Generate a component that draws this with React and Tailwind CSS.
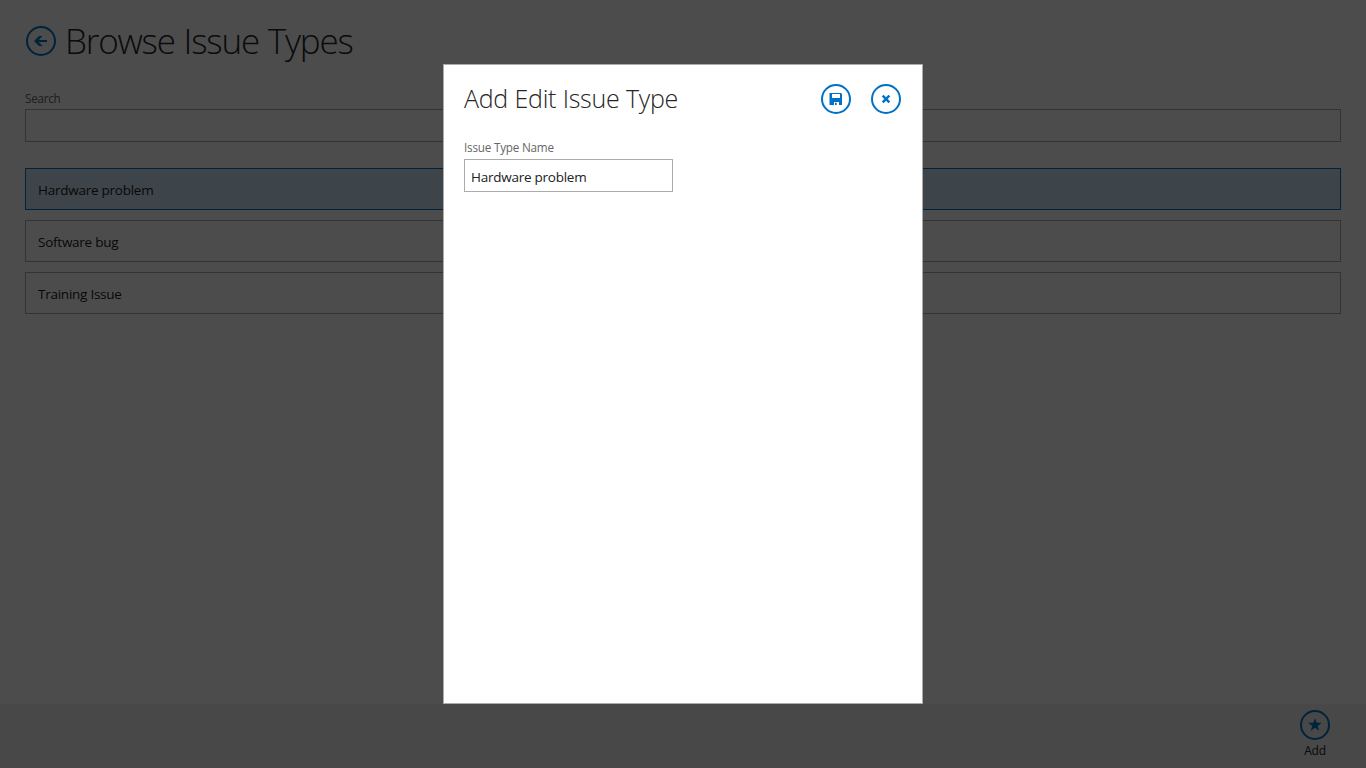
const issueTypes = ["Hardware problem", "Software bug", "Training Issue"];

function RoundIcon({ label, children }) {
  return (
    <button aria-label={label} className="block size-[30px] shrink-0 text-[#0072c6]">
      <svg viewBox="0 0 30 30" className="size-[30px]" fill="currentColor">
        <circle cx="15" cy="15" r="14" fill="none" stroke="currentColor" strokeWidth="2" />
        {children}
      </svg>
    </button>
  );
}

function Page() {
  return (
    <div className="flex h-full flex-col bg-white">
      <header className="flex h-[89px] items-start pl-[26px] pt-[26px]">
        <RoundIcon label="Back">
          <path d="M8 15 13 10H16.6L12.6 14H21V16H12.6L16.6 20H13Z" />
        </RoundIcon>
        <h1 className="ml-[9px] -mt-[9px] whitespace-nowrap text-[35px] font-light leading-[48px] tracking-[-1.2px] text-[#262626] [word-spacing:1px]">
          Browse Issue Types
        </h1>
      </header>
      <main className="flex-1 px-[25px]">
        <label className="block h-5 text-[11.7px] leading-[18px] tracking-[-0.25px] text-[#666666]">Search</label>
        <div className="h-[33px] border border-[#ababab]" />
        <ul className="mt-[26px] flex flex-col gap-2.5">
          {issueTypes.map((name, i) => (
            <li
              key={name}
              className={
                "h-[42px] border pl-3 text-[13.5px] leading-[42px] tracking-[-0.25px] text-[#212121] " +
                (i === 0 ? "border-[#0072c6] bg-[#cde6f7]" : "border-[#ababab]")
              }
            >
              {name}
            </li>
          ))}
        </ul>
      </main>
      <footer className="flex h-16 justify-end bg-[#f1f1f1] pr-[26px] pt-1.5">
        <div className="flex w-[50px] flex-col items-center">
          <RoundIcon label="Add">
            <path d="M15 8 16.7 12.8H21.8L17.7 15.9 19.2 20.8 15 17.8 10.8 20.8 12.3 15.9 8.2 12.8H13.3Z" />
          </RoundIcon>
          <span className="mt-0.5 text-[12px] leading-[18px] tracking-[-0.2px] text-[#212121]">Add</span>
        </div>
      </footer>
    </div>
  );
}

function Dialog() {
  return (
    <section role="dialog" className="h-[640px] w-[480px] border border-[#ababab] bg-white px-5 pt-[19px]">
      <header className="flex h-[54px] items-start">
        <h2 className="-mt-0.5 flex-1 whitespace-nowrap text-[25px] font-light leading-8 tracking-[-0.3px] text-[#262626] [word-spacing:0.5px]">
          Add Edit Issue Type
        </h2>
        <div className="flex gap-5 pr-px">
          <RoundIcon label="Save">
            <path
              fillRule="evenodd"
              d="M8.5 9H20L21 10V21H18V18H13V21H8.5ZM11 10V14H19V10ZM14 18.7H15.7V21H14Z"
            />
          </RoundIcon>
          <RoundIcon label="Close">
            <path d="M10.8 12.5 12.5 10.8 15 13.3 17.5 10.8 19.2 12.5 16.7 15 19.2 17.5 17.5 19.2 15 16.7 12.5 19.2 10.8 17.5 13.3 15Z" />
          </RoundIcon>
        </div>
      </header>
      <label className="block h-[21px] text-[11.7px] leading-[18px] tracking-[-0.21px] text-[#666666]">Issue Type Name</label>
      <div className="h-[33px] w-[209px] border border-[#ababab] pl-1.5 pt-px text-[13.5px] leading-[32px] tracking-[-0.25px] text-[#212121]">
        Hardware problem
      </div>
    </section>
  );
}

export default function App() {
  return (
    <div className="relative h-screen w-screen overflow-hidden font-['Open_Sans','Noto_Sans',sans-serif]">
      <Page />
      <div className="absolute inset-0 flex items-center justify-center bg-black/70">
        <Dialog />
      </div>
    </div>
  );
}
